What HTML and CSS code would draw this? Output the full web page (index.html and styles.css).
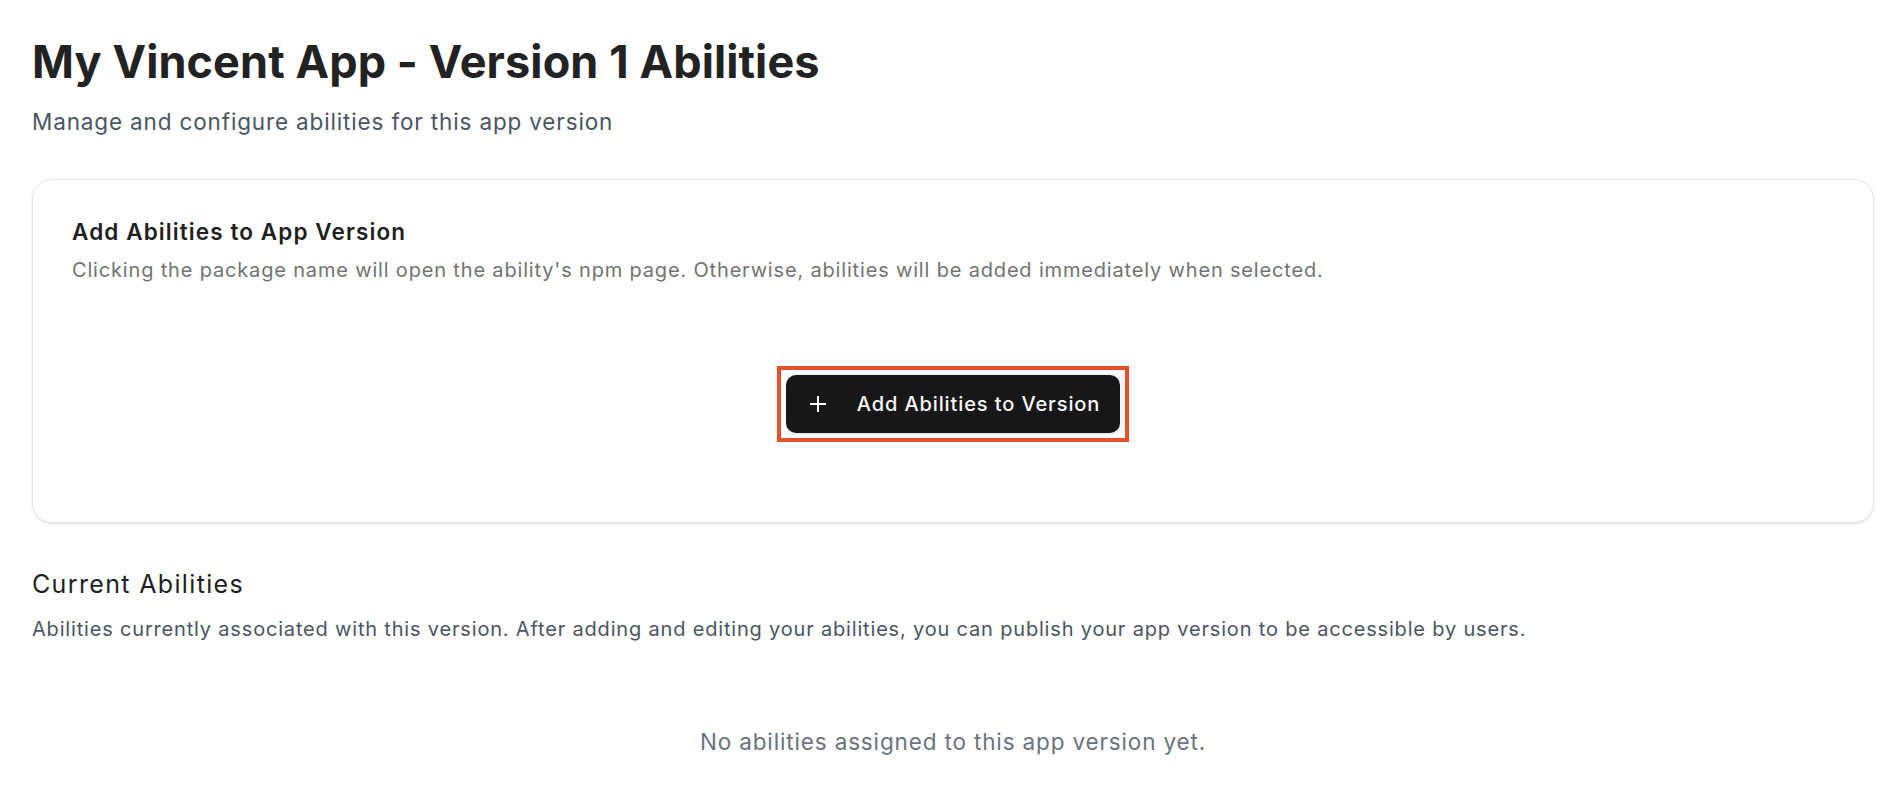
FILE: index.html
```html
<!DOCTYPE html>
<html lang="en">
<head>
<meta charset="utf-8">
<title>My Vincent App - Version 1 Abilities</title>
<link rel="stylesheet" href="styles.css">
</head>
<body>
<main class="page">
  <header class="page-header">
    <h1 class="page-title">My Vincent App - Version 1 Abilities</h1>
    <p class="page-subtitle">Manage and configure abilities for this app version</p>
  </header>

  <section class="card">
    <h2 class="card-title">Add Abilities to App Version</h2>
    <p class="card-desc">Clicking the package name will open the ability's npm page. Otherwise, abilities will be added immediately when selected.</p>
    <div class="card-actions">
      <div class="highlight">
        <button class="btn-primary" type="button">
          <svg class="btn-icon" viewBox="0 0 18 18" width="18" height="18" fill="none" stroke="currentColor" stroke-width="2"><path d="M9 1v16M1 9h16"/></svg>
          <span>Add Abilities to Version</span>
        </button>
      </div>
    </div>
  </section>

  <section class="current">
    <h2 class="current-title">Current Abilities</h2>
    <p class="current-desc">Abilities currently associated with this version. After adding and editing your abilities, you can publish your app version to be accessible by users.</p>
    <p class="empty">No abilities assigned to this app version yet.</p>
  </section>
</main>
</body>
</html>
```

FILE: styles.css
```css
* { box-sizing: border-box; }

html, body {
  margin: 0;
  padding: 0;
  background: #ffffff;
}

body {
  font-family: Inter, "Noto Sans", sans-serif;
  color: #1f1f1f;
}

.page {
  padding: 37px 30px 0 32px;
}

.page-header {
  display: flex;
  flex-direction: column;
  gap: 17px;
}

.page-title {
  margin: 0;
  font-size: 45px;
  line-height: 50px;
  font-weight: 700;
  color: #222222;
  letter-spacing: 0.1px;
}

.page-subtitle {
  margin: 0;
  font-size: 22.5px;
  line-height: 35px;
  color: #4b5563;
  letter-spacing: 0.85px;
}

.card {
  margin-top: 40px;
  border: 1px solid #e5e5e5;
  border-radius: 20px;
  box-shadow: 0 1px 3px rgba(0, 0, 0, 0.08), 0 1px 2px rgba(0, 0, 0, 0.04);
  padding: 38px 39px 80px;
}

.card-title {
  margin: 0;
  font-size: 22.5px;
  line-height: 28px;
  font-weight: 600;
  color: #1f1f1f;
  letter-spacing: 1.1px;
}

.card-desc {
  margin: 10px 0 0;
  font-size: 20px;
  line-height: 28px;
  color: #737373;
  letter-spacing: 0.83px;
}

.card-actions {
  margin-top: 82px;
  display: flex;
  justify-content: center;
}

.highlight {
  border: 4px solid #e8502a;
  padding: 5px;
}

.btn-primary {
  display: flex;
  align-items: center;
  gap: 30px;
  height: 58px;
  padding: 0 20px 0 23px;
  border: none;
  border-radius: 10px;
  background: #171717;
  color: #fafafa;
  font-family: inherit;
  font-size: 20px;
  font-weight: 500;
  letter-spacing: 0.9px;
  white-space: nowrap;
  box-shadow: 0 1px 2px rgba(0, 0, 0, 0.1);
}

.btn-icon {
  flex: none;
}

.current {
  margin-top: 44px;
}

.current-title {
  margin: 0;
  font-size: 25px;
  line-height: 35px;
  font-weight: 400;
  color: #1f1f1f;
  letter-spacing: 1.35px;
}

.current-desc {
  margin: 13px 0 0;
  font-size: 20px;
  line-height: 28px;
  color: #4b5563;
  letter-spacing: 0.82px;
}

.empty {
  margin: 84px 0 0;
  text-align: center;
  font-size: 22.5px;
  line-height: 30px;
  color: #6b7280;
  letter-spacing: 0.85px;
}
```
